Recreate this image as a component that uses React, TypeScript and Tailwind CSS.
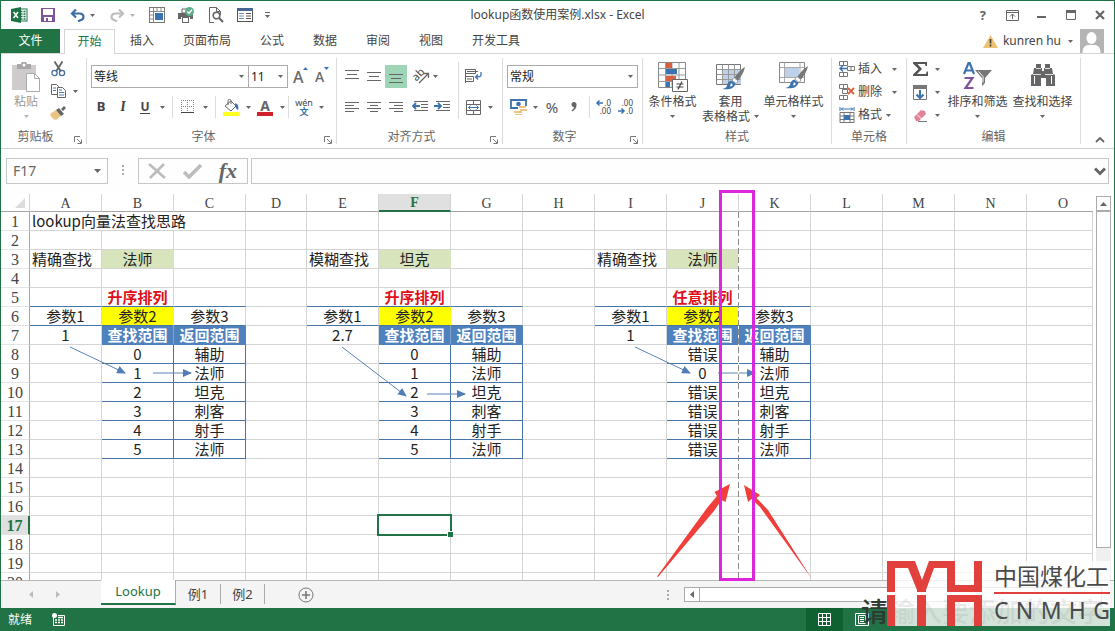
import React from 'react';

type Kids = { children?: React.ReactNode };

const Caret = ({ color = '#666' }: { color?: string }) => (
  <svg width="5" height="3" viewBox="0 0 5 3" className="shrink-0" aria-hidden="true">
    <path d="M0 0h5L2.500 3z" fill={color} />
  </svg>
);

const CaretBtn = ({ label }: { label: string }) => (
  <button aria-label={label} className="flex h-[22px] w-3 shrink-0 items-center justify-center">
    <Caret />
  </button>
);

const Sep = () => <span className="h-[22px] w-px shrink-0 bg-[#dcdcdc]" />;

const Tool = ({ label, wide, children }: Kids & { label: string; wide?: boolean }) => (
  <button
    aria-label={label}
    className={`flex h-[22px] shrink-0 items-center justify-center ${wide ? 'w-[30px]' : 'w-[22px]'}`}
  >
    {children}
  </button>
);

/* ---------- title bar icons ---------- */

const ExcelLogo = () => (
  <svg width="17" height="16" viewBox="0 0 17 16">
    <rect x="8" y="2" width="8" height="12" fill="#fff" stroke="#1e7145" />
    <path d="M9.500 4.500h2M12.500 4.500h2M9.500 7h2M12.500 7h2M9.500 9.500h2M12.500 9.500h2M9.500 12h2M12.500 12h2" stroke="#1e7145" strokeWidth="1.300" />
    <path d="M0 2l10-2v16L0 14z" fill="#1e7145" />
    <path d="M2.600 5l4.400 6M7 5l-4.400 6" stroke="#fff" strokeWidth="1.500" />
  </svg>
);
const SaveIcon = () => (
  <svg width="14" height="14" viewBox="0 0 14 14">
    <path d="M0 0h14v14H0z" fill="#80549b" />
    <path d="M2 1h10v6H2zM3 9h8v4H7v-3H5v3H3z" fill="#fff" />
  </svg>
);
const UndoIcon = ({ color }: { color: string }) => (
  <svg width="15" height="13" viewBox="0 0 15 13" fill="none" stroke={color} strokeWidth="2.200">
    <path d="M2 4.500h7.500c5 0 5 5.500 1.500 6.500l-3 1.200" />
    <path d="M6 .5L2 4.500l4 4" />
  </svg>
);
const FreezeIcon = () => (
  <svg width="16" height="16" viewBox="0 0 16 16">
    <rect x=".5" y=".5" width="15" height="15" fill="#fff" stroke="#777" />
    <path d="M4.500 1v14M1 4.500h14M8 1v4M12 1v4M1 8h4M1 12h4" stroke="#8a8a8a" />
    <rect x="6" y="6" width="8" height="7" fill="#3b73af" />
  </svg>
);
const PrintIcon = () => (
  <svg width="17" height="16" viewBox="0 0 17 16">
    <path d="M4 2h6v4H4z" fill="#fff" stroke="#666" />
    <path d="M0 6h15v6h-3v-2H3v2H0z" fill="#666" />
    <rect x="4.500" y="10.500" width="6" height="5" fill="#fff" stroke="#666" />
    <circle cx="11.500" cy="4.500" r="4.500" fill="#5fae8b" />
    <path d="M9.300 4.500l1.700 1.800 3-3.500" fill="none" stroke="#fff" strokeWidth="1.400" />
  </svg>
);
const PreviewIcon = () => (
  <svg width="15" height="16" viewBox="0 0 15 16" fill="none" stroke="#666">
    <path d="M5 15.500H.5V.5h7l4 4V8M7.500.5v4h4" />
    <circle cx="7.500" cy="8.500" r="3.300" strokeWidth="1.600" fill="#fff" />
    <path d="M10 11l4 4" strokeWidth="2.200" />
  </svg>
);
const FormIcon = () => (
  <svg width="16" height="14" viewBox="0 0 16 14">
    <rect x=".5" y=".5" width="15" height="13" fill="#fff" stroke="#555" />
    <path d="M0 0h16v3H0z" fill="#446a94" />
    <path d="M2 5.500h5M2 8h5M2 10.500h5" stroke="#6d93bd" />
    <path d="M9 5.500h5M9 8h5M9 10.500h5" stroke="#555" />
  </svg>
);

const TitleBar = () => (
  <header className="grid h-7 shrink-0 grid-cols-[1fr_auto_1fr] items-center">
    <div className="flex items-center pl-[10px]">
      <ExcelLogo />
      <button aria-label="保存" className="ml-[13px]"><SaveIcon /></button>
      <button aria-label="撤消" className="ml-[15px]"><UndoIcon color="#3b6ba5" /></button>
      <button aria-label="撤消列表" className="ml-[5px]"><Caret /></button>
      <button aria-label="恢复" className="ml-[15px] -scale-x-100"><UndoIcon color="#bdbdbd" /></button>
      <button aria-label="恢复列表" className="ml-[5px]"><Caret color="#b5b5b5" /></button>
      <button aria-label="冻结窗格" className="ml-[14px]"><FreezeIcon /></button>
      <button aria-label="快速打印" className="ml-[13px]"><PrintIcon /></button>
      <button aria-label="打印预览" className="ml-[14px]"><PreviewIcon /></button>
      <button aria-label="记录单" className="ml-[13px]"><FormIcon /></button>
      <button aria-label="自定义快速访问工具栏" className="ml-3 flex flex-col items-center gap-[2px]">
        <span className="h-px w-[5px] bg-[#666]" />
        <Caret />
      </button>
    </div>
    <h1 className="text-xs text-[#444]">lookup函数使用案例.xlsx - Excel</h1>
    <div className="flex items-center justify-end pr-[9px] text-[#666]">
      <button aria-label="帮助" className="text-[13px] leading-4 font-bold">?</button>
      <button aria-label="功能区显示选项" className="ml-5">
        <svg width="13" height="11" viewBox="0 0 13 11" fill="none" stroke="#666">
          <path d="M.5.5h12v10H.5zM.5 2.500h12M6.500 9V4M4 6.500L6.500 4 9 6.500" />
        </svg>
      </button>
      <button aria-label="最小化" className="ml-[18px]">
        <svg width="10" height="10" viewBox="0 0 10 10"><path d="M0 6h9v2H0z" fill="#666" /></svg>
      </button>
      <button aria-label="最大化" className="ml-[19px]">
        <svg width="10" height="10" viewBox="0 0 10 10"><path d="M.5 1v8.500h9V1" fill="none" stroke="#666" /><path d="M0 0h10v3H0z" fill="#666" /></svg>
      </button>
      <button aria-label="关闭" className="ml-[19px]">
        <svg width="10" height="10" viewBox="0 0 10 10"><path d="M1 1l8 8M9 1L1 9" stroke="#666" strokeWidth="2.200" /></svg>
      </button>
    </div>
  </header>
);

const TABS = ['插入', '页面布局', '公式', '数据', '审阅', '视图', '开发工具'];

const TabRow = () => (
  <nav className="flex h-[25px] shrink-0 items-stretch border-b border-[#d5d5d5] text-xs text-[#444]">
    <button className="w-[59px] bg-[#217346] text-white">文件</button>
    <button className="-mb-px ml-1 w-[51px] border border-b-0 border-[#d5d5d5] bg-white text-[#217346]">开始</button>
    <div className="ml-[15px] flex gap-[29px]">
      {TABS.map((t) => (
        <button key={t}>{t}</button>
      ))}
    </div>
    <div className="ml-auto flex items-center pr-[10px]">
      <svg width="15" height="13" viewBox="0 0 15 13">
        <path d="M7.500 0L15 13H0z" fill="#edc274" />
        <path d="M7.500 4v4.500M7.500 9.500v2" stroke="#444" strokeWidth="1.700" />
      </svg>
      <button className="ml-[5px] flex items-center gap-[7px]">
        kunren hu
        <Caret />
      </button>
      <svg width="24" height="24" viewBox="0 0 24 24" className="ml-[7px]">
        <path d="M0 0h24v24H0z" fill="#b4b4b4" />
        <ellipse cx="11.500" cy="9" rx="5" ry="6" fill="#fff" />
        <path d="M2.500 24c0-6 3-8 6-8h6c3 0 6 2 6 8z" fill="#fff" />
      </svg>
    </div>
  </nav>
);

/* ---------- ribbon ---------- */

const Launcher = () => (
  <button aria-label="更多选项" className="flex w-4 justify-end pt-[6px] pr-1">
    <svg width="8" height="8" viewBox="0 0 8 8" fill="none" stroke="#777">
      <path d="M.5 6V.5H6M3 3l4 4M7.500 3.500v4h-4" />
    </svg>
  </button>
);

const Group = ({ label, width, launcher, children }: Kids & { label: string; width: string; launcher?: boolean }) => (
  <section aria-label={label} className={`my-1 flex shrink-0 flex-col border-r border-[#dcdcdc] ${width}`}>
    <div className="flex h-[72px] shrink-0">{children}</div>
    <div className="flex h-[14px] items-center text-xs leading-[14px] text-[#666]">
      <span className="flex-1 text-center">{label}</span>
      {launcher && <Launcher />}
    </div>
  </section>
);

const Big = ({ icon, lines, width, caret, dim }: { icon: React.ReactNode; lines: string[]; width: string; caret?: boolean; dim?: boolean }) => (
  <button className={`flex shrink-0 flex-col items-center pt-1 text-xs leading-[15px] whitespace-nowrap ${width} ${dim ? 'text-[#999]' : 'text-[#444]'}`}>
    <span className="flex h-8 items-start">{icon}</span>
    <span>{lines[0]}</span>
    <span className="flex h-[15px] items-center gap-1">
      {lines[1]}
      {caret && <Caret color={dim ? '#b5b5b5' : '#666'} />}
    </span>
  </button>
);

const PasteIcon = () => (
  <svg width="28" height="30" viewBox="0 0 28 30">
    <path d="M0 3h24v25H0z" fill="#cfcacb" />
    <path d="M5 2h4c0-3 6-3 6 0h4v5H5z" fill="#aaa7a7" />
    <circle cx="12" cy="3" r="1.500" fill="#fff" />
    <path d="M14.500 11.500h8l5 5v13h-13z" fill="#fff" stroke="#aaa" />
    <path d="M22.500 11.500v5h5" fill="none" stroke="#aaa" />
  </svg>
);
const CutIcon = () => (
  <svg width="15" height="16" viewBox="0 0 15 16" fill="none">
    <path d="M3.500.5l6.500 10M11.500.5L5 10.500" stroke="#666" strokeWidth="1.900" />
    <circle cx="3.500" cy="12" r="2.600" stroke="#446f9c" strokeWidth="1.300" />
    <circle cx="11" cy="12" r="2.600" stroke="#446f9c" strokeWidth="1.300" />
  </svg>
);
const CopyIcon = () => (
  <svg width="15" height="14" viewBox="0 0 15 14">
    <path d="M.5.5h5l2 2v8h-7z" fill="#fff" stroke="#666" />
    <path d="M6.500 3.500h5l3 3v7h-8z" fill="#fff" stroke="#666" />
    <path d="M2 4h3M2 6.500h3M8 6h3M8 8.500h5M8 11h5" stroke="#4a7ab0" />
  </svg>
);
const PainterIcon = () => (
  <svg width="16" height="14" viewBox="0 0 16 14">
    <path d="M0 8l6-4 5 6-5 4c-2 0-5-3-6-6z" fill="#ecc482" />
    <path d="M6 4l3-2 5 6-3 2zM11 3l3-3 2 2-3 3z" fill="#666" />
  </svg>
);

const Clipboard = () => (
  <Group label="剪贴板" width="w-[86px]" launcher>
    <Big icon={<PasteIcon />} lines={['粘贴']} width="w-[50px]" caret dim />
    <div className="-ml-1 flex flex-col">
      <Tool label="剪切"><CutIcon /></Tool>
      <div className="flex">
        <Tool label="复制"><CopyIcon /></Tool>
        <CaretBtn label="复制选项" />
      </div>
      <Tool label="格式刷"><PainterIcon /></Tool>
    </div>
  </Group>
);

const Drop = ({ label, value, width }: { label: string; value: string; width: string }) => (
  <div className={`grid h-[23px] shrink-0 items-center border border-[#ababab] bg-white ${width}`}>
    <select
      aria-label={label}
      defaultValue={value}
      className="col-start-1 row-start-1 h-[21px] w-full appearance-none bg-transparent pl-[2px] text-xs text-[#222] outline-none"
    >
      <option>{value}</option>
    </select>
    <span className="pointer-events-none col-start-1 row-start-1 justify-self-end pr-1">
      <Caret />
    </span>
  </div>
);

const FontGroup = () => (
  <Group label="字体" width="w-[250px]" launcher>
    <div className="flex flex-col gap-2 pt-[7px] pl-1 text-[#444]">
      <div className="flex items-center">
        <Drop label="字体名称" value="等线" width="w-[158px]" />
        <Drop label="字号" value="11" width="-ml-px w-10" />
        <button aria-label="增大字号" className="ml-[5px] flex w-[18px] text-base leading-5 font-medium text-[#666]">
          A<svg width="5" height="3" viewBox="0 0 5 3"><path d="M0 3h5L2.500 0z" fill="#3b73af" /></svg>
        </button>
        <button aria-label="减小字号" className="ml-1 flex w-[18px] text-sm leading-5 font-medium text-[#666]">
          A<svg width="5" height="3" viewBox="0 0 5 3"><path d="M0 0h5L2.500 3z" fill="#3b73af" /></svg>
        </button>
      </div>
      <div className="-ml-px flex items-center">
        <Tool label="加粗"><b className="text-[13px]">B</b></Tool>
        <Tool label="倾斜"><i className="font-serif text-sm font-bold">I</i></Tool>
        <Tool label="下划线"><b className="border-b border-[#444] text-xs leading-[13px]">U</b></Tool>
        <CaretBtn label="下划线选项" />
        <span className="w-1" />
        <Sep />
        <span className="w-1" />
        <Tool label="边框">
          <svg width="14" height="14" viewBox="0 0 14 14" fill="none" stroke="#888" strokeDasharray="1 1">
            <path d="M.5 0v13M6.500 0v13M12.500 0v13M0 .5h13M0 6.500h13" />
            <path d="M0 12.500h13" stroke="#444" strokeDasharray="none" />
          </svg>
        </Tool>
        <CaretBtn label="边框选项" />
        <span className="w-1" />
        <Sep />
        <span className="w-1" />
        <Tool label="填充颜色">
          <svg width="17" height="17" viewBox="0 0 17 17">
            <path d="M2 7l6-5 5 5-5 5z" fill="#fff" stroke="#666" />
            <path d="M5 6V1.500c0-1.500 3-1.500 3 0V5" fill="none" stroke="#666" />
            <path d="M12 4c3 1 4 4 3 7-2-1-3-3-3-7z" fill="#3b73af" />
            <path d="M0 13h16v4H0z" fill="#ff2" />
          </svg>
        </Tool>
        <CaretBtn label="填充颜色选项" />
        <Tool label="字体颜色">
          <span className="w-4 border-b-4 border-[#d0202a] text-sm leading-[13px] font-bold text-[#666]">A</span>
        </Tool>
        <CaretBtn label="字体颜色选项" />
        <Sep />
        <span className="w-1" />
        <Tool label="拼音指南">
          <span className="flex flex-col items-center text-[9px] leading-[9px]">
            <span>wén</span>
            <b className="text-[#3b73af]">文</b>
          </span>
        </Tool>
        <CaretBtn label="拼音选项" />
      </div>
    </div>
  </Group>
);

const Lines = ({ d }: { d: string }) => (
  <svg width="14" height="13" viewBox="0 0 14 13" fill="none" stroke="#666">
    <path d={d} />
  </svg>
);
const IndentIcon = ({ d }: { d: string }) => (
  <svg width="16" height="12" viewBox="0 0 16 12" fill="none">
    <path d="M2 .5h14M9 3.500h7M9 6.500h7M2 9.500h14" stroke="#666" />
    <path d={d} stroke="#3b73af" strokeWidth="1.800" />
  </svg>
);

const AlignGroup = () => (
  <Group label="对齐方式" width="w-[166px]" launcher>
    <div className="flex w-[118px] flex-col gap-2 pt-[7px] pl-1">
      <div className="flex h-[23px]">
        <Tool label="顶端对齐"><Lines d="M0 .5h14M2 4.500h10M0 8.500h14" /></Tool>
        <Tool label="垂直居中"><Lines d="M0 2.500h14M2 6.500h10M0 10.500h14" /></Tool>
        <button aria-label="底端对齐" className="flex h-[23px] w-[22px] items-end justify-center bg-[#9fd5b7] pb-1">
          <Lines d="M0 3.500h14M2 7.500h10M0 11.500h14" />
        </button>
        <Tool label="方向" wide>
          <svg width="18" height="18" viewBox="0 0 18 18" className="overflow-visible">
            <text x="0" y="11" transform="rotate(-45 6 9)" fontSize="11" fill="#444">ab</text>
            <path d="M6 16l9-9M11 6.500h4.500V11" fill="none" stroke="#666" strokeWidth="1.300" />
          </svg>
        </Tool>
        <span className="-ml-2">
          <CaretBtn label="方向选项" />
        </span>
      </div>
      <div className="flex">
        <Tool label="左对齐"><Lines d="M0 1.500h14M0 4.500h9M0 7.500h14M0 10.500h9" /></Tool>
        <Tool label="居中"><Lines d="M0 1.500h14M3 4.500h8M0 7.500h14M3 10.500h8" /></Tool>
        <Tool label="右对齐"><Lines d="M0 1.500h14M5 4.500h9M0 7.500h14M5 10.500h9" /></Tool>
        <span className="w-[2px]" />
        <Tool label="减少缩进量"><IndentIcon d="M8 5H1M4 2L1 5l3 3" /></Tool>
        <Tool label="增加缩进量"><IndentIcon d="M0 5h7M4 2l3 3-3 3" /></Tool>
      </div>
    </div>
    <span className="mt-1 ml-[3px] h-[57px] w-px bg-[#dcdcdc]" />
    <div className="flex flex-col gap-2 pt-[7px] pl-[3px]">
      <div className="flex h-[23px]">
        <Tool label="自动换行">
          <svg width="17" height="16" viewBox="0 0 17 16" fill="none" stroke="#666">
            <path d="M.5 1v14M.5 1.500h10v4H.5M.5 8.500h8v5h-8M2 3.500h11M2 11h5" />
            <path d="M16 4v3c0 2-2 2-5 2M13 6.500L10.500 9l2.500 2.500" stroke="#3b73af" strokeWidth="1.300" />
          </svg>
        </Tool>
      </div>
      <div className="flex">
        <Tool label="合并后居中">
          <svg width="15" height="15" viewBox="0 0 15 15" fill="none" stroke="#666">
            <path d="M.5.5h14v14H.5zM.5 4.500h14M.5 10.500h14M7.500.5v4M7.500 10.500v4" />
            <path d="M2.500 7.500h10M4.500 5.500l-2 2 2 2M10.500 5.500l2 2-2 2" stroke="#3b73af" />
          </svg>
        </Tool>
        <CaretBtn label="合并选项" />
      </div>
    </div>
  </Group>
);

const DecimalIcon = ({ top, bottom, left }: { top: string; bottom: string; left?: boolean }) => (
  <svg width="18" height="18" viewBox="0 0 18 18" className="overflow-visible">
    <text x="16" y="8" textAnchor="end" fontSize="8" fill="#444">{top}</text>
    <text x="16" y="16" textAnchor="end" fontSize="8" fill="#444">{bottom}</text>
    {left
      ? <path d="M8 5H2M4.500 2.500L2 5l2.500 2.500" fill="none" stroke="#3b73af" strokeWidth="1.500" />
      : <path d="M1 13h6M4.500 10.500L7 13l-2.500 2.500" fill="none" stroke="#3b73af" strokeWidth="1.500" />}
  </svg>
);

const NumberGroup = () => (
  <Group label="数字" width="w-[140px]" launcher>
    <div className="flex flex-col gap-2 pt-[7px] pl-1 text-[#555]">
      <Drop label="数字格式" value="常规" width="w-[131px]" />
      <div className="flex items-center">
        <Tool label="会计数字格式">
          <svg width="17" height="16" viewBox="0 0 17 16">
            <path d="M1 1h15v8H1z" fill="#fff" stroke="#3b73af" strokeWidth="1.800" />
            <circle cx="8.500" cy="5" r="2.300" fill="#3b73af" />
            <path d="M8 7h9v9H8z" fill="#fff" />
            <path d="M9 7h7v2H9zM10 10h7v2h-7zM4 12h8v2H4zM5 15h7v1H5z" fill="#ecc482" />
          </svg>
        </Tool>
        <CaretBtn label="会计格式选项" />
        <Tool label="百分比样式"><span className="text-[15px]">%</span></Tool>
        <Tool label="千位分隔样式">
          <svg width="6" height="10" viewBox="0 0 6 10"><path d="M3 0a2.500 2.500 0 0 1 2.500 3C5.500 6 4 8 1 9.500L.5 8.500C2 7.500 3 6 3 5A2.500 2.500 0 1 1 3 0z" fill="#666" /></svg>
        </Tool>
        <span className="w-1" />
        <Sep />
        <span className="w-[3px]" />
        <Tool label="增加小数位数"><DecimalIcon top=".0" bottom=".00" left /></Tool>
        <Tool label="减少小数位数"><DecimalIcon top=".00" bottom=".0" /></Tool>
      </div>
    </div>
  </Group>
);

const CondIcon = () => (
  <svg width="30" height="31" viewBox="0 0 30 31">
    <path d="M.5.5h27v25H.5z" fill="#fff" stroke="#888" />
    <path d="M7.500.5v25M14 .5v25M21 .5v25M.5 6.500h27M.5 13h27M.5 19.500h27" stroke="#999" />
    <path d="M8 1h6v5H8zM8 14h10v5H8z" fill="#d9603f" />
    <path d="M8 7h11v5H8zM8 20h4v5H8z" fill="#3b73af" />
    <path d="M14.500 17.500h15v12h-15z" fill="#fff" stroke="#666" />
    <path d="M18.500 22h7M18.500 25h7M24 19.500l-4 8" stroke="#444" strokeWidth="1.200" />
  </svg>
);
const Brush = () => (
  <>
    <path d="M29 5c-4 2-8 7-10.500 10.500l3.500 3C25 15 28 10 29 5z" fill="#777" />
    <path d="M18 15.500l4 3.500-2 2.500-4-3.500z" fill="#fff" stroke="#777" strokeWidth=".6" />
    <path d="M15.500 18.500l4 3.500c-2 5-7 6-13 5 4-1 4-2 5-5 .7-2 2-3 4-3.500z" fill="#3b73af" />
    <path d="M15 21l2 2c-1 1-2 1.500-3 1.500z" fill="#fff" />
  </>
);
const TableFmtIcon = () => (
  <svg width="30" height="30" viewBox="0 0 30 30">
    <path d="M.5 2.500h24v20H.5z" fill="#fff" stroke="#777" />
    <path d="M7 8h18v14H7z" fill="#bdd1e8" />
    <path d="M6.500 2.500v20M12.500 2.500v20M18.500 2.500v20M.5 7.500h24M.5 12.500h24M.5 17.500h24" stroke="#999" />
    <Brush />
  </svg>
);
const CellStyleIcon = () => (
  <svg width="30" height="30" viewBox="0 0 30 30">
    <path d="M.5.5h25v20H.5z" fill="#fff" stroke="#888" />
    <path d="M5.500.5v20M21 .5v20M.5 5.500h25M.5 15.500h25" stroke="#aaa" />
    <path d="M6 6h14v9H6z" fill="#bdd1e8" />
    <g transform="translate(0 -1)"><Brush /></g>
  </svg>
);

const StyleGroup = () => (
  <Group label="样式" width="w-[189px]">
    <Big icon={<CondIcon />} lines={['条件格式']} width="w-[59px]" caret />
    <Big icon={<TableFmtIcon />} lines={['套用', '表格格式']} width="w-[57px]" caret />
    <Big icon={<CellStyleIcon />} lines={['单元格样式']} width="w-[69px]" caret />
  </Group>
);

const CellIcon = ({ kind }: { kind: 'insert' | 'delete' | 'format' }) => (
  <svg width="16" height="16" viewBox="0 0 16 16" fill="none" stroke="#777">
    {kind === 'format' ? (
      <>
        <path d="M1 5.500h14v10H1zM1 9h14M1 12.500h14M5 5.500v10M11 5.500v10" />
        <path d="M5 8h6v5H5z" fill="#3b73af" stroke="none" />
        <path d="M1 0v4M15 0v4M2 2h12M4 .5L2.500 2 4 3.500M12 .5L13.500 2 12 3.500" stroke="#3b73af" />
      </>
    ) : (
      <>
        <path d="M.5.5h8v4h-8zM4.500.5v4M.5 11.500h8v4h-8zM4.500 11.500v4" />
        <path d={kind === 'insert' ? 'M8.500 5.500h7v4h-7zM12 5.500v4' : 'M3.500 5.500h5v4h-5z'} />
        {kind === 'insert'
          ? <path d="M8 7.500H1M4 4.500l-3 3 3 3" stroke="#3b73af" strokeWidth="1.500" />
          : <path d="M9 4l6 6M15 4l-6 6" stroke="#d9603f" strokeWidth="1.800" />}
      </>
    )}
  </svg>
);

const CellsGroup = () => (
  <Group label="单元格" width="w-[75px]">
    <div className="flex flex-col pl-[7px] text-xs text-[#444]">
      <button className="flex h-[22px] items-center gap-[3px]"><CellIcon kind="insert" />插入<span className="ml-[7px]"><Caret /></span></button>
      <button className="flex h-6 items-center gap-[3px]"><CellIcon kind="delete" />删除<span className="ml-[7px]"><Caret /></span></button>
      <button className="flex h-[22px] items-center gap-[3px]"><CellIcon kind="format" />格式<span className="ml-px"><Caret /></span></button>
    </div>
  </Group>
);

const SortIcon = () => (
  <svg width="30" height="30" viewBox="0 0 30 30">
    <path d="M1 12L5.500 1h1.200L11 12M3 8.500h6.500" fill="none" stroke="#3b73af" strokeWidth="2.200" />
    <path d="M1.500 16h8l-7 10h8" fill="none" stroke="#80549b" strokeWidth="2.200" />
    <path d="M12 8h17l-7 8v5l-3 3v-8z" fill="#777" />
    <path d="M15.500 9.500l4.500 5v6" fill="none" stroke="#fff" />
  </svg>
);
const FindIcon = () => (
  <svg width="26" height="26" viewBox="0 0 26 26">
    <path d="M6 2h5v4h1v3h2V6h1V2h5v4h2l1 6 2 1v11h-9v-8h-5v8H1V13l2-1 1-6h2z" fill="#666" />
    <path d="M6 6.500h5M15 6.500h5M3 12.500h8M15 12.500h8" stroke="#fff" strokeWidth=".8" />
    <path d="M4.500 14v8M21.500 14v8" stroke="#fff" strokeWidth="1" />
  </svg>
);

const EditGroup = () => (
  <Group label="编辑" width="w-[174px]">
    <div className="-ml-[2px] flex w-10 flex-col pl-1">
      <div className="flex">
        <Tool label="自动求和">
          <svg width="15" height="14" viewBox="0 0 15 14"><path d="M0 0h14v4h-1.500l-.5-2H4.500l4.500 5-5 5h9l.7-2.500H15V14H0v-1.500L5.500 7 0 1.500z" fill="#555" /></svg>
        </Tool>
        <CaretBtn label="求和选项" />
      </div>
      <div className="flex h-6 items-center">
        <Tool label="填充">
          <svg width="14" height="15" viewBox="0 0 14 15"><path d="M.5.5h13v14H.5z" fill="#fff" stroke="#777" /><path d="M0 0h14v4H0z" fill="#777" /><path d="M7 5v8M3.500 9.500L7 13l3.500-3.500" fill="none" stroke="#3b73af" strokeWidth="2" /></svg>
        </Tool>
        <CaretBtn label="填充选项" />
      </div>
      <div className="flex">
        <Tool label="清除">
          <svg width="14" height="13" viewBox="0 0 14 13"><path d="M1 8l7-7 4 1 1 3-7 7H3z" fill="#e58396" /><path d="M4 5.500l4.500 4.500" stroke="#fff" /><path d="M5 12.500h9" stroke="#777" /></svg>
        </Tool>
        <CaretBtn label="清除选项" />
      </div>
    </div>
    <Big icon={<SortIcon />} lines={['排序和筛选']} width="w-[65px]" caret />
    <Big icon={<FindIcon />} lines={['查找和选择']} width="w-[65px]" caret />
  </Group>
);

const Ribbon = () => (
  <div className="flex h-[95px] shrink-0 border-b border-[#d0d0d0]">
    <Clipboard />
    <FontGroup />
    <AlignGroup />
    <NumberGroup />
    <StyleGroup />
    <CellsGroup />
    <EditGroup />
    <button aria-label="折叠功能区" className="mt-auto ml-auto pr-[9px] pb-[5px]">
      <svg width="10" height="6" viewBox="0 0 10 6"><path d="M1 5l4-4 4 4" fill="none" stroke="#666" strokeWidth="1.800" /></svg>
    </button>
  </div>
);

/* ---------- formula bar ---------- */

const FormulaBar = () => (
  <div className="flex h-[45px] shrink-0 items-start bg-[#fefefe] pt-[9px] pr-[5px] pl-[5px]">
    <div className="flex h-[26px] w-[102px] shrink-0 items-center border border-[#c6c6c6] pr-[6px]">
      <input aria-label="名称框" defaultValue="F17" className="w-full min-w-0 bg-transparent pl-[6px] text-sm text-[#666] outline-none" />
      <svg width="7" height="4" viewBox="0 0 7 4" className="shrink-0"><path d="M0 0h7L3.500 4z" fill="#666" /></svg>
    </div>
    <svg width="3" height="12" viewBox="0 0 3 12" className="mt-[6px] ml-[14px]"><path d="M0 1h2v2H0zM0 5h2v2H0zM0 9h2v2H0z" fill="#aaa" /></svg>
    <div className="ml-[13px] flex h-[26px] w-[110px] shrink-0 items-center justify-between border border-[#c6c6c6] pr-[10px] pl-[9px]">
      <button aria-label="取消"><svg width="18" height="16" viewBox="0 0 18 16"><path d="M1 1l16 14M16 1L2 15" stroke="#bcbcbc" strokeWidth="2.600" /></svg></button>
      <button aria-label="输入"><svg width="19" height="16" viewBox="0 0 19 16"><path d="M1 9l5 5L18 2" fill="none" stroke="#bcbcbc" strokeWidth="3.600" /></svg></button>
      <button aria-label="插入函数" className="font-['Liberation_Serif',serif] text-[22px] leading-5 font-bold text-[#666] italic">fx</button>
    </div>
    <div className="ml-[3px] flex h-[26px] min-w-0 flex-1 items-center border border-[#c6c6c6] pr-[2px]">
      <input aria-label="编辑栏" className="min-w-0 flex-1 bg-transparent px-1 text-sm outline-none" />
      <button aria-label="展开编辑栏"><svg width="12" height="9" viewBox="0 0 12 9"><path d="M1 1.500l5 5 5-5" fill="none" stroke="#666" strokeWidth="3" /></svg></button>
    </div>
  </div>
);

/* ---------- sheet ---------- */

const COLS = 'ABCDEFGHIJKLMNO'.split('');
const ROWS = Array.from({ length: 20 }, (_, i) => i + 1);

type Block = { cols: [string, string, string]; find: string; key: string; order: string; input: string; look: string[] };
const BLOCKS: Block[] = [
  { cols: ['A', 'B', 'C'], find: '精确查找', key: '法师', order: '升序排列', input: '1', look: ['0', '1', '2', '3', '4', '5'] },
  { cols: ['E', 'F', 'G'], find: '模糊查找', key: '坦克', order: '升序排列', input: '2.7', look: ['0', '1', '2', '3', '4', '5'] },
  { cols: ['I', 'J', 'K'], find: '精确查找', key: '法师', order: '任意排列', input: '1', look: ['错误', '0', '错误', '错误', '错误', '错误'] },
];
const RESULTS = ['辅助', '法师', '坦克', '刺客', '射手', '法师'];

const GRID = 'border-r-[#d4d4d4] border-b-[#d4d4d4]';
const RULED = 'border-r-[#d4d4d4] border-b-[#4674a6]';
const BOXED = 'border-r-[#4674a6] border-b-[#4674a6]';

type Cell = { text: string; cls: string };
const CELLS: Record<string, Cell> = {};
BLOCKS.forEach(({ cols: [a, b, c], find, key, order, input, look }) => {
  CELLS[a + 3] = { text: find, cls: `${GRID} pl-[2px] text-left` };
  CELLS[b + 3] = { text: key, cls: 'border-r-[#d8e4bc] border-b-[#d4d4d4] bg-[#d8e4bc]' };
  CELLS[a + 5] = { text: '', cls: RULED };
  CELLS[b + 5] = { text: order, cls: `${RULED} font-bold text-[#e0101a]` };
  CELLS[c + 5] = { text: '', cls: RULED };
  CELLS[a + 6] = { text: '参数1', cls: RULED };
  CELLS[b + 6] = { text: '参数2', cls: 'border-r-[#ffff00] border-b-[#4674a6] bg-[#ffff00]' };
  CELLS[c + 6] = { text: '参数3', cls: RULED };
  CELLS[a + 7] = { text: input, cls: GRID };
  CELLS[b + 7] = { text: '查找范围', cls: 'border-r-[#7fa3cf] border-b-[#4f81bd] bg-[#4f81bd] font-bold text-white' };
  CELLS[c + 7] = { text: '返回范围', cls: 'border-r-[#4f81bd] border-b-[#4f81bd] bg-[#4f81bd] font-bold text-white' };
  RESULTS.forEach((r, i) => {
    CELLS[b + (8 + i)] = { text: look[i], cls: b === 'J' ? RULED : BOXED };
    CELLS[c + (8 + i)] = { text: r, cls: BOXED };
  });
});

const Selection = () => (
  <span className="pointer-events-none absolute -top-[2px] -right-[2px] -bottom-[2px] -left-[2px] border-2 border-[#217346]">
    <span className="absolute -right-[3px] -bottom-[3px] h-[6px] w-[6px] border-t border-l border-white bg-[#217346]" />
  </span>
);

const Grid = () => (
  <table className="w-full table-fixed border-separate border-spacing-0 font-['Noto_Sans_CJK_SC',sans-serif] text-[15px] leading-[18px] text-[#222]">
    <colgroup>
      <col className="w-[29px]" />
      {COLS.map((c) => (
        <col key={c} className={c === 'O' ? 'w-auto' : c === 'D' ? 'w-[61px]' : 'w-[72px]'} />
      ))}
    </colgroup>
    <thead className="font-['Liberation_Serif',serif] text-sm">
      <tr>
        <th className="h-[18px] border-r border-b border-[#a6a6a6] border-r-[#d4d4d4] p-0">
          <svg width="11" height="10" viewBox="0 0 11 10" className="mr-[3px] ml-auto"><path d="M10 0v10H0z" fill="#dcdcdc" /></svg>
        </th>
        {COLS.map((c) => (
          <th
            key={c}
            scope="col"
            className={`h-[18px] border-r border-r-[#d4d4d4] pt-[2px] pb-0 leading-[14px] ${
              c === 'F' ? 'border-b-2 border-b-[#217346] bg-[#e0e0e0] font-bold text-[#217346]' : 'border-b border-b-[#a6a6a6] font-normal text-[#444]'
            } ${c === 'O' ? 'border-r-0 pr-0 pl-[6px]' : 'px-0'}`}
          >
            {c}
          </th>
        ))}
      </tr>
    </thead>
    <tbody>
      {ROWS.map((r) => (
        <tr key={r}>
          <th
            scope="row"
            className={`h-[19px] border-b border-b-[#e4e4e4] px-0 pt-[2px] pb-0 font-['Liberation_Serif',serif] text-base leading-4 ${
              r === 17 ? 'border-r-2 border-r-[#217346] bg-[#e0e0e0] font-bold text-[#217346]' : 'border-r border-r-[#a6a6a6] font-normal text-[#444]'
            }`}
          >
            {r}
          </th>
          {COLS.map((c) => {
            if (r === 1 && c === 'A') {
              return (
                <td key={c} colSpan={3} className={`h-[19px] border-r border-b p-0 pl-[2px] whitespace-nowrap ${GRID}`}>
                  lookup向量法查找思路
                </td>
              );
            }
            if (r === 1 && (c === 'B' || c === 'C')) return null;
            const cell = CELLS[c + r];
            const active = c === 'F' && r === 17;
            return (
              <td
                key={c}
                className={`h-[19px] border-r border-b p-0 text-center whitespace-nowrap ${cell ? cell.cls : GRID} ${active ? 'relative' : ''}`}
              >
                {cell?.text}
                {active && <Selection />}
              </td>
            );
          })}
        </tr>
      ))}
    </tbody>
  </table>
);

const LINKS: [number, number, number, number][] = [
  [70, 153, 125, 179], [153, 179, 191, 179],
  [342, 153, 406, 202], [427, 200, 465, 200],
  [635, 153, 690, 179], [718, 179, 755, 179],
];

const Drawings = () => (
  <svg width="900" height="390" viewBox="1 0 900 390" className="pointer-events-none absolute top-0 left-0 overflow-visible" aria-hidden="true">
    <defs>
      <marker id="tip" markerWidth="9" markerHeight="8" refX="8" refY="4" orient="auto" markerUnits="userSpaceOnUse">
        <path d="M0 0l9 4-9 4z" fill="#4f7db8" />
      </marker>
    </defs>
    {LINKS.map(([x1, y1, x2, y2]) => (
      <line key={`${x1}-${y1}`} x1={x1} y1={y1} x2={x2} y2={y2} stroke="#5a82b8" markerEnd="url(#tip)" />
    ))}
    <path d="M738.500 18v368" stroke="#fff" />
    <path d="M738.500 18v368" stroke="#8a8a8a" strokeDasharray="6 3" />
    <path d="M657 382.500L707 314l10-12-2.500-4L730 290l-4.500 18-4-2L714 317l-56 66z" fill="#f03e3a" />
    <path d="M812 385L760 313l-8.500-8-3.500 3-4-17 16 10-3.500 3L768 316z" fill="#f03e3a" />
    <rect x="720.500" y="-2.500" width="33" height="388" fill="none" stroke="#dc26dc" strokeWidth="3" />
  </svg>
);

const Sheet = () => (
  <main className="relative flex min-h-0 flex-1">
    <div className="min-w-0 flex-1 overflow-hidden">
      <Grid />
    </div>
    <div className="ml-[3px] flex w-[15px] shrink-0 flex-col pt-[2px]">
      <button aria-label="向上滚动" className="flex h-[15px] shrink-0 items-center justify-center border border-[#ababab] bg-white">
        <svg width="7" height="4" viewBox="0 0 7 4"><path d="M0 4h7L3.500 0z" fill="#666" /></svg>
      </button>
      <div className="min-h-0 flex-1 bg-[#f0f0f0] pb-8">
        <div className="h-full border border-[#ababab] bg-white" />
      </div>
    </div>
    <span className="w-[3px] shrink-0" />
    <Drawings />
  </main>
);

/* ---------- bottom bars ---------- */

const SheetTabs = () => (
  <div className="flex h-7 shrink-0 border-t border-[#b8b8b8] bg-[#f4f4f4] pr-3 text-[13px] text-[#444]">
    <div className="flex w-[100px] shrink-0 items-center gap-[23px] pl-7">
      <button aria-label="上一个工作表"><svg width="4" height="7" viewBox="0 0 4 7"><path d="M4 0v7L0 3.500z" fill="#bdbdbd" /></svg></button>
      <button aria-label="下一个工作表"><svg width="4" height="7" viewBox="0 0 4 7"><path d="M0 0v7l4-3.500z" fill="#bdbdbd" /></svg></button>
    </div>
    <button className="-mt-px mb-[3px] w-[75px] border-r border-b-2 border-r-[#ababab] border-b-[#217346] bg-white text-[#217346]">Lookup</button>
    <button className="mt-[3px] mb-1 w-[45px] border-r border-[#ababab] leading-4">例1</button>
    <button className="mt-[3px] mb-1 w-11 border-r border-[#ababab] leading-4">例2</button>
    <button aria-label="新工作表" className="ml-[33px]">
      <svg width="16" height="16" viewBox="0 0 16 16" fill="none" stroke="#777"><circle cx="8" cy="8" r="7" /><path d="M4 8h8M8 4v8" strokeWidth="1.600" /></svg>
    </button>
    <svg width="2" height="12" viewBox="0 0 2 12" className="my-auto ml-auto shrink-0"><path d="M0 1h2v2H0zM0 5h2v2H0zM0 9h2v2H0z" fill="#aaa" /></svg>
    <div className="my-auto ml-[15px] flex h-[15px] w-[38%] items-stretch">
      <button aria-label="向左滚动" className="flex w-4 items-center justify-center border border-[#ababab] bg-white">
        <svg width="4" height="7" viewBox="0 0 4 7"><path d="M4 0v7L0 3.500z" fill="#666" /></svg>
      </button>
      <div className="-ml-px flex-1 border border-[#ababab] bg-white" />
    </div>
  </div>
);

const StatusBar = () => (
  <footer className="flex h-[23px] shrink-0 items-center bg-[#217346] pl-[7px] text-xs text-white">
    <span>就绪</span>
    <button aria-label="录制宏" className="ml-5">
      <svg width="13" height="13" viewBox="0 0 13 13"><path d="M1.500 3v9.500h11v-10H6" fill="none" stroke="#fff" /><circle cx="2.500" cy="2.500" r="2.500" fill="#fff" /><path d="M6 4.500h5M3 7h2M6 7h2M9 7h2M3 9.500h2M6 9.500h2M9 9.500h2" stroke="#fff" strokeWidth="1.300" /></svg>
    </button>
    <div className="mr-[233px] ml-auto flex h-full items-center">
      <button aria-label="普通视图" className="flex h-full w-[37px] items-center justify-center bg-[#0f6131]">
        <svg width="13" height="13" viewBox="0 0 13 13" fill="none" stroke="#fff"><path d="M.5.5h12v12H.5zM4.500.5v12M8.500.5v12M.5 4.500h12M.5 8.500h12" /></svg>
      </button>
      <button aria-label="页面布局视图" className="flex h-full w-[38px] items-center justify-center">
        <svg width="14" height="13" viewBox="0 0 14 13" fill="none" stroke="#fff"><path d="M.5.5h13v12H.5zM3.500 2.500h7v8h-7zM5 4.500h4M5 6.500h4M5 8.500h4" /></svg>
      </button>
    </div>
  </footer>
);

const Watermark = () => (
  <div className="pointer-events-none absolute right-1 bottom-[5px] flex h-[65px] w-[223px] bg-white/80">
    <p className="absolute -left-[26px] bottom-0 flex text-[27px] leading-7 font-medium whitespace-nowrap text-[#2e3a33]">
      请<span className="text-[#9a9a9a]/20">输入要添加的文字</span>
    </p>
    <svg width="95" height="65" viewBox="0 0 95 65" className="relative shrink-0" fill="#e1403c">
      <path d="M0 0h28l7 19 7-19h26v24h19V0h8v31H60V7H47l-8 22v2h-9v-2L21 7H8v24H0z" />
      <path d="M0 34h8v31H0zM30 34h9v31h-9zM60 34h35v31h-8V41H68v24h-8z" />
    </svg>
    <div className="relative ml-3 flex w-[116px] flex-col text-[#4a4a4a]">
      <span className="text-[23px] leading-[31px]">中国煤化工</span>
      <span className="h-[2px] bg-[#e1403c]" />
      <span className="flex justify-between text-[23px] leading-8">
        {'CNMHG'.split('').map((l) => (
          <span key={l}>{l}</span>
        ))}
      </span>
    </div>
  </div>
);

export default function App() {
  return (
    <div className="relative flex h-screen flex-col overflow-hidden border border-b-0 border-[#217346] bg-white font-['Noto_Sans','Noto_Sans_CJK_SC',sans-serif]">
      <TitleBar />
      <TabRow />
      <Ribbon />
      <FormulaBar />
      <Sheet />
      <SheetTabs />
      <StatusBar />
      <Watermark />
    </div>
  );
}
